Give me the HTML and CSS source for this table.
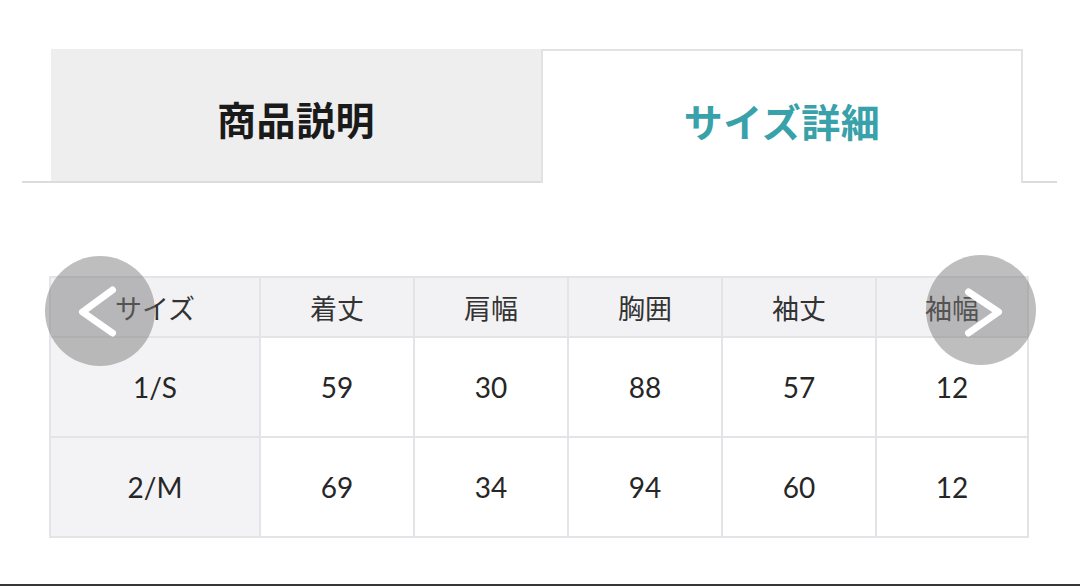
FILE: index.html
```html
<!DOCTYPE html>
<html lang="ja">
<head>
<meta charset="utf-8">
<title>サイズ詳細</title>
<link rel="stylesheet" href="styles.css">
</head>
<body>
<div class="page">
  <div class="tabs">
    <div class="tab">商品説明</div>
    <div class="tab tab-active">サイズ詳細</div>
  </div>

  <div class="size-wrap">
    <table class="size-table">
      <colgroup>
        <col class="c-first">
        <col class="c-mid">
        <col class="c-mid">
        <col class="c-mid">
        <col class="c-mid">
        <col class="c-last">
      </colgroup>
      <thead>
        <tr>
          <th class="h-first">サイズ</th>
          <th>着丈</th>
          <th>肩幅</th>
          <th>胸囲</th>
          <th>袖丈</th>
          <th>袖幅</th>
        </tr>
      </thead>
      <tbody>
        <tr>
          <th class="row-head">1/S</th>
          <td>59</td><td>30</td><td>88</td><td>57</td><td>12</td>
        </tr>
        <tr>
          <th class="row-head">2/M</th>
          <td>69</td><td>34</td><td>94</td><td>60</td><td>12</td>
        </tr>
      </tbody>
    </table>

    <button class="nav nav-prev" aria-label="前へ">
      <svg width="110" height="110" viewBox="0 0 110 110"><polyline points="67.5,34 37.5,56 67.5,77" fill="none" stroke="#fff" stroke-width="7" stroke-linecap="round" stroke-linejoin="round"/></svg>
    </button>
    <button class="nav nav-next" aria-label="次へ">
      <svg width="110" height="110" viewBox="0 0 110 110"><polyline points="42.5,37 72.5,57 42.5,78" fill="none" stroke="#fff" stroke-width="7" stroke-linecap="round" stroke-linejoin="round"/></svg>
    </button>
  </div>

  <div class="bottom-bar"></div>
</div>
</body>
</html>
```

FILE: styles.css
```css
* { box-sizing: border-box; }

html, body {
  margin: 0;
  padding: 0;
  background: #ffffff;
}

body {
  font-family: "Noto Sans CJK JP", "Noto Sans", sans-serif;
  color: #2b2b2b;
}

.page {
  width: 1080px;
  height: 586px;
  display: flex;
  flex-direction: column;
  padding-top: 49px;
  overflow: hidden;
}

.tabs {
  display: flex;
  margin: 0 23px 0 22px;
  padding: 0 34px 0 29px;
  border-bottom: 2px solid #dcdcdc;
  height: 134px;
}

.tab {
  flex: 0 0 490px;
  height: 132px;
  background: #eeeeee;
  display: flex;
  align-items: center;
  justify-content: center;
  font-size: 39px;
  font-weight: 700;
  color: #1a1a1a;
  padding-top: 6px;
  letter-spacing: 0.5px;
}

.tab-active {
  flex: 0 0 482px;
  height: 134px;
  background: #ffffff;
  border: 2px solid #e2e2e2;
  border-bottom: none;
  margin-bottom: -2px;
  color: #38a1aa;
}

.size-wrap {
  position: relative;
  margin: 93px 0 0 49px;
  width: 980px;
}

.size-table {
  border-collapse: separate;
  border-spacing: 2px;
  background: #e4e4e8;
  table-layout: fixed;
  width: 980px;
}

.c-first { width: 208px; }
.c-mid { width: 152px; }
.c-last { width: 150px; }

.size-table th,
.size-table td {
  padding: 0;
  text-align: center;
  vertical-align: middle;
}

.size-table thead th {
  height: 58px;
  background: #f2f2f5;
  font-family: "Noto Sans CJK JP", sans-serif;
  font-size: 27px;
  font-weight: 400;
  color: #333333;
}

.size-table tbody th,
.size-table tbody td {
  height: 98px;
  font-family: Lato, "Noto Sans", sans-serif;
  font-size: 28px;
  font-weight: 400;
  color: #262626;
  background: #ffffff;
}

.size-table tbody th.row-head {
  background: #f3f3f6;
}

.nav {
  position: absolute;
  width: 110px;
  height: 110px;
  padding: 0;
  border: none;
  border-radius: 50%;
  background: rgba(120, 120, 120, 0.48);
  display: block;
}

.nav svg { display: block; }

.nav-prev { left: -4.5px; top: -20px; }
.nav-next { left: 876.5px; top: -21px; }

.bottom-bar {
  margin-top: auto;
  height: 2px;
  background: #363636;
  flex: 0 0 2px;
}
```
